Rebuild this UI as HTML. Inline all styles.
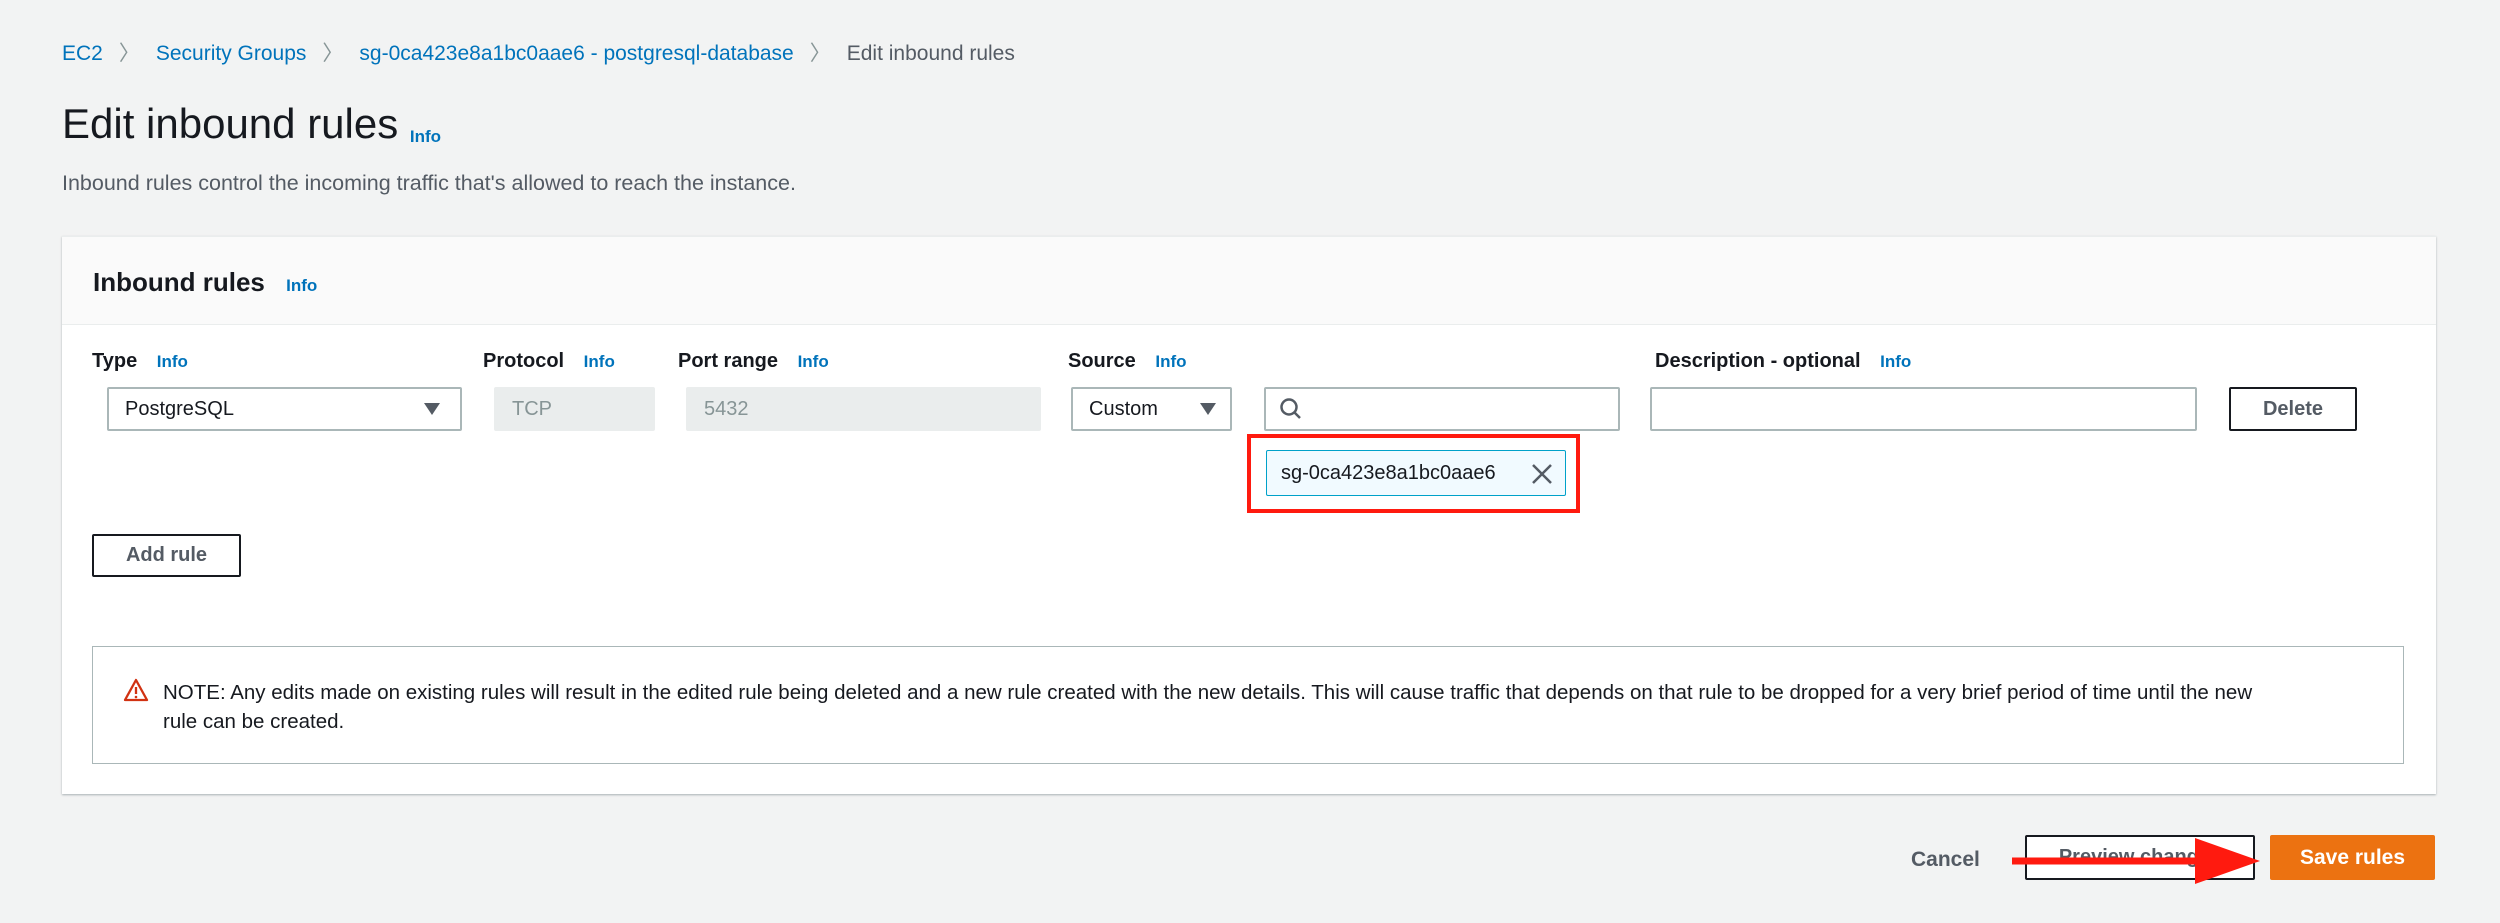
<!DOCTYPE html>
<html><head><meta charset="utf-8"><style>
*{box-sizing:border-box;margin:0;padding:0}
body{width:2500px;height:923px;background:#f2f3f3;font-family:"Liberation Sans",sans-serif;color:#16191f;position:relative;overflow:hidden}
.a{position:absolute;white-space:nowrap}
.bl{color:#0073bb}
.info{color:#0073bb;font-size:17px;font-weight:bold}
.lbl{font-size:20px;font-weight:bold;top:350px}
.in{position:absolute;top:387px;height:44px;border:2px solid #aab7b8;border-radius:2px;background:#fff;font-size:20px;padding-left:16px;line-height:40px}
.dis{background:#eaeded;border-color:#eaeded;color:#879596}
.btn{position:absolute;border:2px solid #16191f;border-radius:2px;background:#fff;color:#545b64;font-weight:bold;font-size:20px;text-align:center}
.tri{position:absolute;width:0;height:0;border-left:8px solid transparent;border-right:8px solid transparent;border-top:12px solid #545b64}
</style></head><body>
<div class="a" style="left:62px;top:37px;font-size:21px"><span class="bl">EC2</span><span style="color:#879596;margin:0 16px">〉</span><span class="bl">Security Groups</span><span style="color:#879596;margin:0 16px">〉</span><span class="bl">sg-0ca423e8a1bc0aae6 - postgresql-database</span><span style="color:#879596;margin:0 16px">〉</span><span style="color:#545b64">Edit inbound rules</span></div>
<div class="a" style="left:62px;top:100px;font-size:42px">Edit inbound rules <span class="info" style="position:relative;top:4px">Info</span></div>
<div class="a" style="left:62px;top:171px;font-size:21.5px;color:#545b64">Inbound rules control the incoming traffic that's allowed to reach the instance.</div>

<div style="position:absolute;left:62px;top:236px;width:2374px;height:558px;background:#fff;box-shadow:0 1px 2px rgba(0,28,36,.3);border-top:1px solid #eaeded"></div>
<div style="position:absolute;left:62px;top:237px;width:2374px;height:88px;background:#fafafa;border-bottom:1px solid #eaeded"></div>
<div class="a" style="left:93px;top:267px;font-size:26px;font-weight:bold">Inbound rules <span class="info" style="margin-left:14px">Info</span></div>

<div class="a lbl" style="left:92px">Type <span class="info" style="margin-left:14px">Info</span></div>
<div class="a lbl" style="left:483px">Protocol <span class="info" style="margin-left:14px">Info</span></div>
<div class="a lbl" style="left:678px">Port range <span class="info" style="margin-left:14px">Info</span></div>
<div class="a lbl" style="left:1068px">Source <span class="info" style="margin-left:14px">Info</span></div>
<div class="a lbl" style="left:1655px">Description - optional <span class="info" style="margin-left:14px">Info</span></div>

<div class="in" style="left:107px;width:355px">PostgreSQL<div class="tri" style="right:20px;top:14px"></div></div>
<div class="in dis" style="left:494px;width:161px">TCP</div>
<div class="in dis" style="left:686px;width:355px">5432</div>
<div class="in" style="left:1071px;width:161px">Custom<div class="tri" style="right:14px;top:14px"></div></div>
<div class="in" style="left:1264px;width:356px"><svg width="26" height="26" viewBox="0 0 26 26" style="position:absolute;left:12px;top:7px"><circle cx="11" cy="11" r="7.5" fill="none" stroke="#545b64" stroke-width="2.5"/><path d="M16 16l6 6" stroke="#545b64" stroke-width="2.5"/></svg></div>
<div class="in" style="left:1650px;width:547px"></div>
<div class="btn" style="left:2229px;top:387px;width:128px;height:44px;line-height:40px">Delete</div>

<div style="position:absolute;left:1247px;top:434px;width:333px;height:79px;border:4px solid #ff1a0f"></div>
<div style="position:absolute;left:1266px;top:450px;width:300px;height:46px;background:#f1faff;border:1px solid #00a1c9;border-radius:2px;font-size:20px;line-height:44px;padding-left:14px">sg-0ca423e8a1bc0aae6<svg width="22" height="22" viewBox="0 0 22 22" style="position:absolute;right:12px;top:12px"><path d="M2 2L20 20M20 2L2 20" stroke="#545b64" stroke-width="2.5"/></svg></div>

<div class="btn" style="left:92px;top:534px;width:149px;height:43px;line-height:39px">Add rule</div>

<div style="position:absolute;left:92px;top:646px;width:2312px;height:118px;border:1px solid #aab7b8;background:#fff"></div>
<svg class="a" width="26" height="24" viewBox="0 0 26 24" style="left:123px;top:678px"><path d="M13 2L24 22H2Z" fill="none" stroke="#d13212" stroke-width="2.3" stroke-linejoin="round"/><path d="M13 9v7" stroke="#d13212" stroke-width="2.3"/><circle cx="13" cy="19" r="1.3" fill="#d13212"/></svg>
<div class="a" style="left:163px;top:678px;font-size:20.5px;line-height:29px">NOTE: Any edits made on existing rules will result in the edited rule being deleted and a new rule created with the new details. This will cause traffic that depends on that rule to be dropped for a very brief period of time until the new<br>rule can be created.</div>

<div class="a" style="left:1911px;top:848px;font-size:21px;font-weight:bold;color:#545b64">Cancel</div>
<div class="btn" style="left:2025px;top:835px;width:230px;height:45px;line-height:41px">Preview changes</div>
<div style="position:absolute;left:2270px;top:835px;width:165px;height:45px;background:#ec7211;border-radius:2px;color:#fff;font-weight:bold;font-size:21px;text-align:center;line-height:45px">Save rules</div>
<svg class="a" width="260" height="60" viewBox="0 0 260 60" style="left:2010px;top:830px"><path d="M2 31H190" stroke="#ff1a0f" stroke-width="7"/><path d="M185 8L250 31L185 54Z" fill="#ff1a0f"/></svg>
</body></html>
